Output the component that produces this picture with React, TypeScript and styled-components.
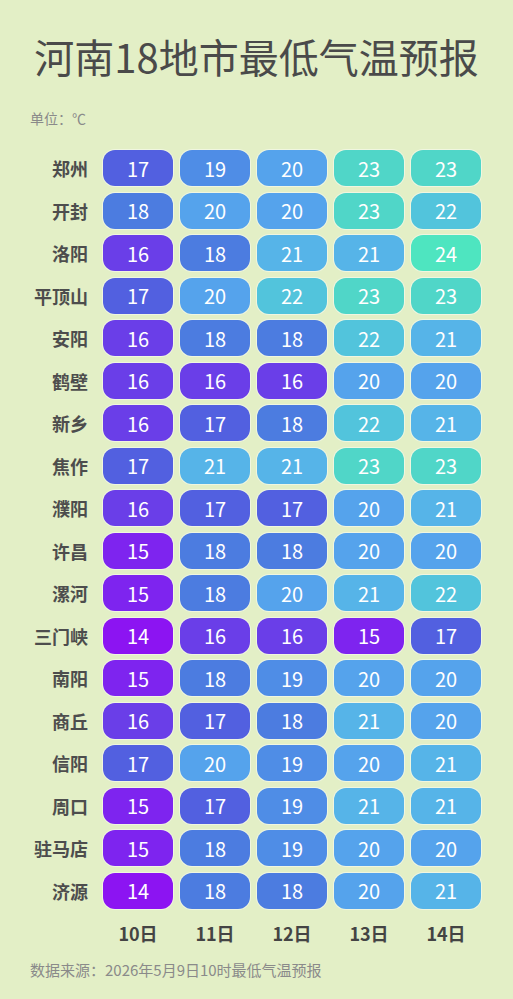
import React from "react";
import styled, { createGlobalStyle } from "styled-components";

const GlobalStyle = createGlobalStyle`
    html, body {
        margin: 0;
        padding: 0;
        background: #e3efc6;
    }
    body {
        font-family: "Noto Sans CJK SC", "Noto Sans", sans-serif;
    }
`;

const Page = styled.div`
    width: 513px;
    height: 999px;
    box-sizing: border-box;
    padding: 32px 32px 0 30px;
    background: #e3efc6;
    overflow: hidden;
`;

const Title = styled.h1`
    margin: 0;
    text-align: center;
    font-size: 40px;
    line-height: 48px;
    font-weight: 400;
    color: #4a4a4a;
    padding-left: 2px;
`;

const Unit = styled.div`
    margin-top: 28px;
    font-size: 14px;
    line-height: 20px;
    color: #8a8a8a;
`;

const Table = styled.div`
    margin-top: 22px;
    display: grid;
    grid-template-columns: 66px repeat(5, 70px);
    column-gap: 7px;
    row-gap: 6.5px;
`;

const City = styled.div`
    display: flex;
    align-items: center;
    justify-content: flex-end;
    padding-right: 8px;
    height: 36px;
    font-size: 18px;
    font-weight: 700;
    color: #4d4d4d;
    white-space: nowrap;
`;

const Cell = styled.div<{ $bg: string }>`
    height: 36px;
    border-radius: 12px;
    background: ${(p) => p.$bg};
    box-shadow: 0 0 0 1px rgba(255, 255, 255, 0.45);
    display: flex;
    align-items: center;
    justify-content: center;
    color: #ffffff;
    font-size: 20px;
    font-weight: 400;
`;

const Days = styled.div`
    margin-top: 12px;
    display: grid;
    grid-template-columns: 66px repeat(5, 70px);
    column-gap: 7px;
`;

const Day = styled.div`
    text-align: center;
    font-size: 18px;
    line-height: 24px;
    font-weight: 700;
    color: #444444;
`;

const Source = styled.div`
    margin-top: 15px;
    font-size: 15px;
    line-height: 20px;
    color: #8a8a8a;
`;

const palette: Record<number, string> = {
    14: "#8c14f2",
    15: "#7e24ef",
    16: "#6a3ee8",
    17: "#5260e0",
    18: "#4c7ce0",
    19: "#4f8de6",
    20: "#55a3ec",
    21: "#56b4e8",
    22: "#52c4dc",
    23: "#50d6c8",
    24: "#4ee5c0",
};

const data: [string, number[]][] = [
    ["郑州", [17, 19, 20, 23, 23]],
    ["开封", [18, 20, 20, 23, 22]],
    ["洛阳", [16, 18, 21, 21, 24]],
    ["平顶山", [17, 20, 22, 23, 23]],
    ["安阳", [16, 18, 18, 22, 21]],
    ["鹤壁", [16, 16, 16, 20, 20]],
    ["新乡", [16, 17, 18, 22, 21]],
    ["焦作", [17, 21, 21, 23, 23]],
    ["濮阳", [16, 17, 17, 20, 21]],
    ["许昌", [15, 18, 18, 20, 20]],
    ["漯河", [15, 18, 20, 21, 22]],
    ["三门峡", [14, 16, 16, 15, 17]],
    ["南阳", [15, 18, 19, 20, 20]],
    ["商丘", [16, 17, 18, 21, 20]],
    ["信阳", [17, 20, 19, 20, 21]],
    ["周口", [15, 17, 19, 21, 21]],
    ["驻马店", [15, 18, 19, 20, 20]],
    ["济源", [14, 18, 18, 20, 21]],
];

const days = ["10日", "11日", "12日", "13日", "14日"];

export default function App() {
    return (
        <>
            <GlobalStyle />
            <Page>
                <Title>河南18地市最低气温预报</Title>
                <Unit>单位：℃</Unit>
                <Table>
                    {data.map(([city, temps]) => (
                        <React.Fragment key={city}>
                            <City>{city}</City>
                            {temps.map((t, i) => (
                                <Cell key={i} $bg={palette[t]}>
                                    {t}
                                </Cell>
                            ))}
                        </React.Fragment>
                    ))}
                </Table>
                <Days>
                    <div />
                    {days.map((d) => (
                        <Day key={d}>{d}</Day>
                    ))}
                </Days>
                <Source>数据来源：2026年5月9日10时最低气温预报</Source>
            </Page>
        </>
    );
}
